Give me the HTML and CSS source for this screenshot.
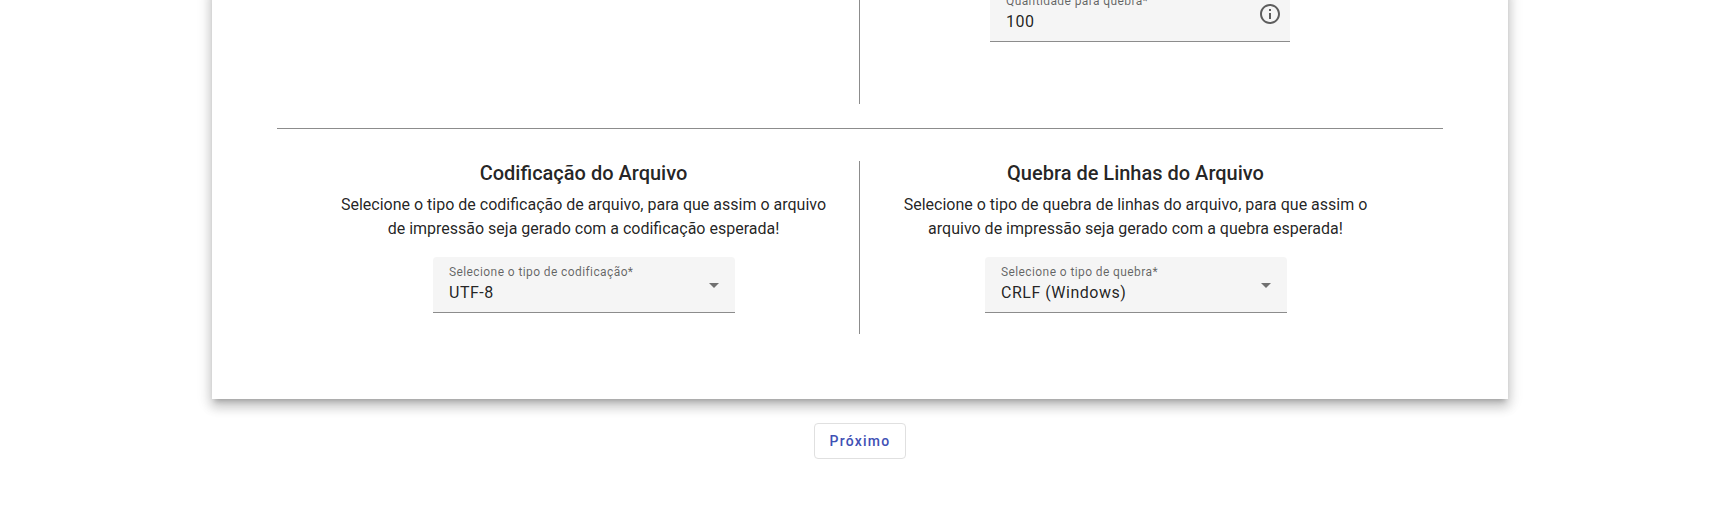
FILE: index.html
```html
<!DOCTYPE html>
<html lang="pt-BR">
<head>
<meta charset="utf-8">
<title>Arquivo de impressão</title>
<link rel="stylesheet" href="styles.css">
</head>
<body>
<main class="page">
  <section class="card">
    <div class="row row-top">
      <div class="col col-divided"></div>
      <div class="col col-qty">
        <div class="field">
          <div class="field-text">
            <span class="field-label">Quantidade para quebra*</span>
            <span class="field-value">100</span>
          </div>
          <svg class="info-icon" viewBox="0 0 24 24" width="24" height="24" aria-hidden="true"><path d="M11 7h2v2h-2zm0 4h2v6h-2zm1-9C6.48 2 2 6.48 2 12s4.48 10 10 10 10-4.48 10-10S17.52 2 12 2zm0 18c-4.41 0-8-3.59-8-8s3.59-8 8-8 8 3.59 8 8-3.59 8-8 8z"/></svg>
        </div>
      </div>
    </div>
    <hr class="rule">
    <div class="row row-bottom">
      <div class="col col-divided col-center">
        <h2 class="title">Codificação do Arquivo</h2>
        <p class="desc">Selecione o tipo de codificação de arquivo, para que assim o arquivo<br>de impressão seja gerado com a codificação esperada!</p>
        <div class="field field-select">
          <div class="field-text">
            <span class="field-label">Selecione o tipo de codificação*</span>
            <span class="field-value">UTF-8</span>
          </div>
          <span class="caret"></span>
        </div>
      </div>
      <div class="col col-center">
        <h2 class="title">Quebra de Linhas do Arquivo</h2>
        <p class="desc">Selecione o tipo de quebra de linhas do arquivo, para que assim o<br>arquivo de impressão seja gerado com a quebra esperada!</p>
        <div class="field field-select">
          <div class="field-text">
            <span class="field-label">Selecione o tipo de quebra*</span>
            <span class="field-value">CRLF (Windows)</span>
          </div>
          <span class="caret"></span>
        </div>
      </div>
    </div>
  </section>
  <div class="actions"><button class="btn" type="button">Próximo</button></div>
</main>
</body>
</html>
```
FILE: styles.css
```css
html, body {
  margin: 0;
  padding: 0;
  height: 509px;
  overflow: hidden;
  background: #fff;
}
body {
  font-family: Roboto, "Liberation Sans", sans-serif;
  color: rgba(0, 0, 0, 0.87);
}
.page {
  display: flex;
  flex-direction: column;
  align-items: center;
}
.card {
  box-sizing: border-box;
  width: 1296px;
  margin-top: -14px;
  padding: 0 65px 65px;
  background: #fff;
  box-shadow: 0 5px 5px -3px rgba(0,0,0,.2), 0 8px 10px 1px rgba(0,0,0,.14), 0 3px 14px 2px rgba(0,0,0,.12);
}
.row {
  display: flex;
  justify-content: center;
}
.row-top { height: 118px; }
.row-bottom { height: 173px; }
.col {
  box-sizing: border-box;
  width: 552px;
  flex: none;
}
.col-divided {
  padding-left: 1px;
  border-right: 1px solid #8c8c8c;
}
.col-qty { padding-left: 130px; }
.col-center {
  display: flex;
  flex-direction: column;
  align-items: center;
}
.rule {
  height: 1px;
  margin: 24px 0 32px;
  border: 0;
  background: #8c8c8c;
}
.title {
  margin: 0;
  font-size: 20px;
  font-weight: 500;
  line-height: 24px;
}
.desc {
  margin: 8px 0 16px;
  font-size: 16px;
  font-weight: 400;
  line-height: 24px;
  text-align: center;
}
.field {
  box-sizing: border-box;
  display: flex;
  align-items: flex-start;
  justify-content: space-between;
  width: 300px;
  height: 56px;
  padding: 0 8px 0 16.5px;
  background: #f5f5f5;
  border-bottom: 1px solid #8c8c8c;
  border-radius: 4px 4px 0 0;
}
.field-select {
  width: 302px;
  padding-right: 16px;
}
.field-text {
  display: flex;
  flex-direction: column;
  padding-top: 7px;
}
.field-label {
  font-size: 12px;
  line-height: 17px;
  letter-spacing: 0.4px;
  color: rgba(0, 0, 0, 0.6);
}
.field-value {
  font-size: 16px;
  line-height: 24px;
  letter-spacing: 0.5px;
}
.info-icon {
  margin-top: 16px;
  fill: rgba(0, 0, 0, 0.62);
}
.caret {
  width: 0;
  height: 0;
  margin-top: 26px;
  border-left: 5px solid transparent;
  border-right: 5px solid transparent;
  border-top: 5px solid rgba(0, 0, 0, 0.54);
}
.actions {
  margin-top: 24px;
}
.btn {
  box-sizing: border-box;
  display: block;
  width: 92px;
  height: 36px;
  padding: 0 0 0 1px;
  background: #fff;
  border: 1px solid #e0e0e0;
  border-radius: 4px;
  font-family: Roboto, "Liberation Sans", sans-serif;
  font-size: 14px;
  font-weight: 500;
  letter-spacing: 1.25px;
  color: #3f51b5;
}
```
